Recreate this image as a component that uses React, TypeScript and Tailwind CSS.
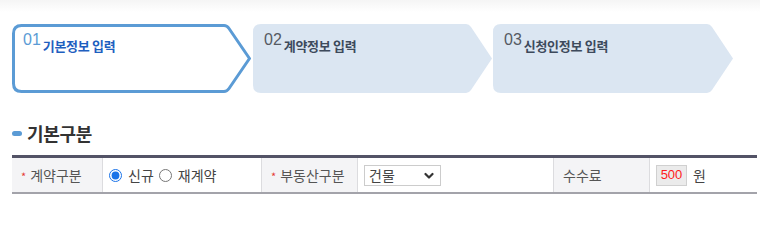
import React from 'react';

const font = { fontFamily: '"Noto Sans CJK KR", "Noto Sans", "Liberation Sans", sans-serif' };

function StepShape({ w, h, tipStart, active }: { w: number; h: number; tipStart: number; active: boolean }) {
  const i = active ? 1.5 : 0;
  const r = 8;
  const d = `M ${i + r} ${i} L ${tipStart} ${i} Q ${tipStart + 3} ${i} ${tipStart + 5} ${i + 3} L ${w - i} ${h / 2} L ${tipStart + 5} ${h - i - 3} Q ${tipStart + 3} ${h - i} ${tipStart} ${h - i} L ${i + r} ${h - i} Q ${i} ${h - i} ${i} ${h - i - r} L ${i} ${i + r} Q ${i} ${i} ${i + r} ${i} Z`;
  return (
    <svg className="absolute inset-0" width={w} height={h} viewBox={`0 0 ${w} ${h}`}>
      <path
        d={d}
        fill={active ? '#ffffff' : '#dbe6f2'}
        stroke={active ? '#5b9bd5' : 'none'}
        strokeWidth={active ? 3 : 0}
        strokeLinejoin="round"
      />
    </svg>
  );
}

function Step({ num, label, active, w, tipStart, className }: { num: string; label: string; active?: boolean; w: number; tipStart: number; className?: string }) {
  return (
    <div className={`relative h-[69px] shrink-0 ${className ?? ''}`} style={{ width: w }}>
      <StepShape w={w} h={69} tipStart={tipStart} active={!!active} />
      <div className="relative flex items-start pl-[11px] pt-[7px]">
        <span className={`text-[16px] leading-none mt-[1px] ${active ? 'text-[#5b9bd5]' : 'text-[#555a63]'}`} style={{ fontFamily: '"Liberation Sans", sans-serif' }}>
          {num}
        </span>
        <span className={`ml-[2px] mt-[8px] text-[13px] font-bold leading-none tracking-[-0.3px] ${active ? 'text-[#1f5fbf]' : 'text-[#3d4a5c]'}`}>
          {label}
        </span>
      </div>
    </div>
  );
}

function Label({ text, req, w }: { text: string; req?: boolean; w: number }) {
  return (
    <div className="flex items-center bg-[#f4f4f6] border-r border-[#dcdcdf] pl-[9px] text-[14px] text-[#555]" style={{ width: w }}>
      {req && <span className="text-[#e53935] text-[11px] mr-[4px] mt-[2px]">*</span>}
      <span>{text}</span>
    </div>
  );
}

export default function App() {
  return (
    <div className="w-[760px] h-[215px] bg-white overflow-hidden" style={font}>
      <div className="h-[12px] bg-gradient-to-b from-[#f5f5f5] to-white" />
      <div className="flex pl-[12px] pt-[12px]">
        <Step num="01" label="기본정보 입력" active w={239} tipStart={212} />
        <Step num="02" label="계약정보 입력" w={239} tipStart={213} className="ml-[2px]" />
        <Step num="03" label="신청인정보 입력" w={240} tipStart={214} className="ml-[1px]" />
      </div>

      <div className="flex items-center pl-[12px] mt-[28px] h-[24px]">
        <span className="w-[10px] h-[5px] rounded-full bg-[#5b9bd5] mr-[5px]" />
        <span className="text-[18px] font-bold text-[#333] tracking-[-0.3px]">기본구분</span>
      </div>

      <div className="ml-[12px] mt-[10px] w-[745px] border-t-[3px] border-t-[#535366] border-b-2 border-b-[#a3a3aa] flex h-[39px]">
        <Label text="계약구분" req w={91} />
        <div className="flex items-center w-[159px] border-r border-[#dcdcdf] pl-[6px] text-[14px] text-[#444]">
          <input type="radio" name="k" defaultChecked className="w-[13px] h-[13px] m-0 accent-[#1a73e8]" />
          <span className="ml-[6px]">신규</span>
          <input type="radio" name="k" className="w-[13px] h-[13px] m-0 ml-[5px]" />
          <span className="ml-[6px]">재계약</span>
        </div>
        <Label text="부동산구분" req w={96} />
        <div className="flex items-center w-[196px] border-r border-[#dcdcdf] pl-[6px]">
          <div className="relative w-[77px] h-[21px] border border-[#cccccc] bg-white flex items-center pl-[4px] text-[14px] text-[#444]">
            <span>건물</span>
            <svg className="absolute right-[6px] top-[6px]" width="10" height="8" viewBox="0 0 10 8">
              <polyline points="1.5,2 5,5.5 8.5,2" fill="none" stroke="#333" strokeWidth="2.2" strokeLinecap="round" strokeLinejoin="round" />
            </svg>
          </div>
        </div>
        <Label text="수수료" w={96} />
        <div className="flex items-center flex-1 pl-[6px]">
          <div className="w-[31px] h-[21px] bg-[#ebebeb] border border-[#d0d0d0] flex items-center justify-center text-[13px] text-[#ff1a1a]" style={{ fontFamily: '"Liberation Sans", sans-serif' }}>
            500
          </div>
          <span className="ml-[6px] text-[14px] text-[#444]">원</span>
        </div>
      </div>
    </div>
  );
}
